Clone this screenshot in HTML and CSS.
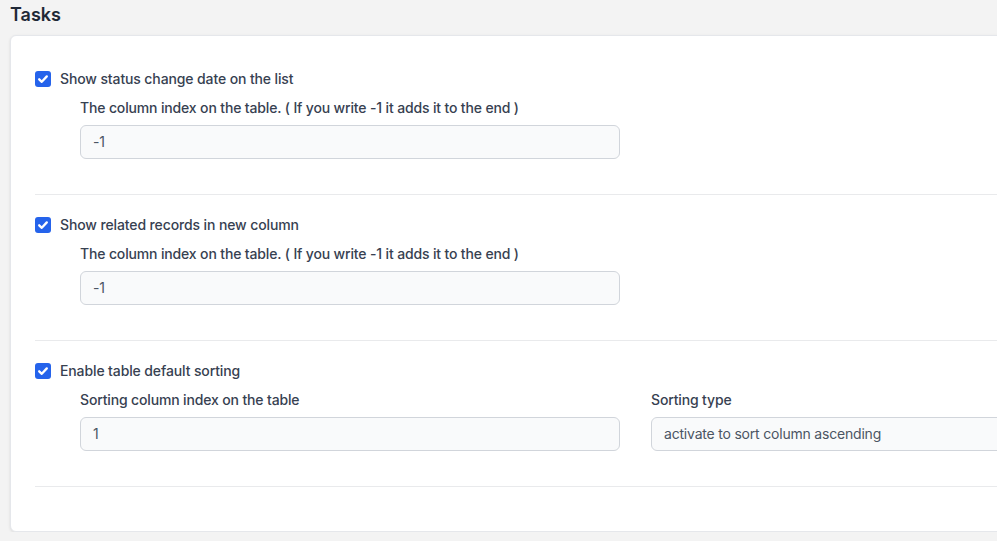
FILE: index.html
```html
<!DOCTYPE html>
<html lang="en">
<head>
<meta charset="utf-8">
<title>Tasks</title>
<link rel="stylesheet" href="styles.css">
</head>
<body>
<h1 class="page-title">Tasks</h1>
<div class="card">
  <section class="section">
    <label class="check-row">
      <span class="checkbox"><svg viewBox="0 0 16 16" width="16" height="16"><path d="M4.2 8.3 L6.8 10.8 L11.8 5.4" fill="none" stroke="#fff" stroke-width="2.3" stroke-linecap="round" stroke-linejoin="round"/></svg></span>
      <span class="check-label">Show status change date on the list</span>
    </label>
    <div class="fields">
      <div class="field">
        <div class="field-label">The column index on the table. ( If you write -1 it adds it to the end )</div>
        <div class="input">-1</div>
      </div>
    </div>
  </section>
  <section class="section">
    <label class="check-row">
      <span class="checkbox"><svg viewBox="0 0 16 16" width="16" height="16"><path d="M4.2 8.3 L6.8 10.8 L11.8 5.4" fill="none" stroke="#fff" stroke-width="2.3" stroke-linecap="round" stroke-linejoin="round"/></svg></span>
      <span class="check-label">Show related records in new column</span>
    </label>
    <div class="fields">
      <div class="field">
        <div class="field-label">The column index on the table. ( If you write -1 it adds it to the end )</div>
        <div class="input">-1</div>
      </div>
    </div>
  </section>
  <section class="section">
    <label class="check-row">
      <span class="checkbox"><svg viewBox="0 0 16 16" width="16" height="16"><path d="M4.2 8.3 L6.8 10.8 L11.8 5.4" fill="none" stroke="#fff" stroke-width="2.3" stroke-linecap="round" stroke-linejoin="round"/></svg></span>
      <span class="check-label">Enable table default sorting</span>
    </label>
    <div class="fields">
      <div class="field">
        <div class="field-label">Sorting column index on the table</div>
        <div class="input">1</div>
      </div>
      <div class="field">
        <div class="field-label">Sorting type</div>
        <div class="input">activate to sort column ascending</div>
      </div>
    </div>
  </section>
</div>
</body>
</html>
```
FILE: styles.css
```css
html, body {
  overflow: hidden;
}
body {
  margin: 0;
  padding: 0 0 0 10px;
  background: #f3f3f3;
  font-family: Inter, "Noto Sans", "Liberation Sans", sans-serif;
  color: #374151;
  width: 1300px;
}
.page-title {
  margin: 0;
  padding: 3px 0 0 0;
  height: 32px;
  line-height: 24px;
  font-size: 18px;
  font-weight: 600;
  color: #1f2937;
}
.card {
  background: #fff;
  border: 1px solid #e5e7eb;
  border-radius: 6px;
  box-shadow: 0 1px 3px rgba(0, 0, 0, 0.1);
  padding: 13px 25px 44px 24px;
  width: 1220px;
  box-sizing: border-box;
}
.section {
  padding: 20px 0 35px;
  border-bottom: 1px solid #e9eaec;
}
.check-row {
  display: flex;
  align-items: center;
  height: 20px;
  gap: 9px;
}
.checkbox {
  width: 16px;
  height: 16px;
  border-radius: 3px;
  background: #2563eb;
  display: flex;
}
.check-label {
  font-size: 14px;
  font-weight: 500;
  color: #374151;
  line-height: 20px;
  letter-spacing: -0.12px;
}
.fields {
  margin-left: 45px;
  margin-top: 9px;
  display: grid;
  grid-template-columns: 540px 540px;
  column-gap: 31px;
}
.field-label {
  font-size: 14px;
  font-weight: 500;
  line-height: 20px;
  color: #374151;
  margin-bottom: 7px;
  white-space: nowrap;
  letter-spacing: -0.15px;
}
.input {
  height: 34px;
  box-sizing: border-box;
  border: 1px solid #d1d5db;
  border-radius: 6px;
  background: #f9fafb;
  padding: 0 11px 0 12px;
  font-size: 14px;
  line-height: 32px;
  color: #4b5563;
  letter-spacing: -0.2px;
}
```
